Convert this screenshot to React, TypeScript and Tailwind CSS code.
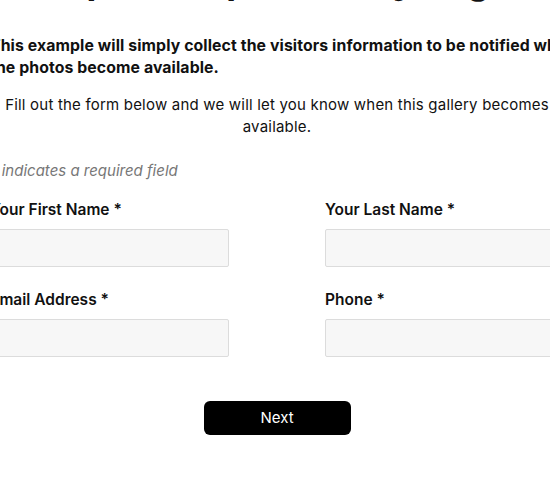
import { useState } from 'react'

// Gallery notify form: a wide centered column that is a little wider than the
// viewport, so both outer edges are clipped, as in the embedded page.

const font = { fontFamily: 'Inter, "Noto Sans", sans-serif' }

function Field({ label, value, onChange }: { label: string; value: string; onChange: (v: string) => void }) {
  return (
    <div className="flex flex-col">
      <label className="h-[22px] text-[15.5px] font-semibold leading-[22px] tracking-[0px] text-[#111]">{label}</label>
      <input
        value={value}
        onChange={(e) => onChange(e.target.value)}
        className="mt-[8px] h-[38px] w-full rounded-[2px] border border-[#dcdcdc] bg-[#f7f7f7] px-3 text-[15px] outline-none"
      />
    </div>
  )
}

export default function App() {
  const [form, setForm] = useState({ first: '', last: '', email: '', phone: '' })
  const set = (k: keyof typeof form) => (v: string) => setForm({ ...form, [k]: v })

  return (
    <div className="h-[501px] w-[550px] overflow-hidden bg-white" style={font}>
      <div className="-ml-[10px] w-[574px]">
        <h1 className="-mt-[39.5px] whitespace-nowrap text-center text-[36px] font-bold leading-[40px] text-[#111]">
          Example Sample Gallery Page Sign
        </h1>

        <p className="mt-[34.5px] whitespace-nowrap text-[15.8px] font-bold leading-[22px] tracking-[0.1px] text-[#111]">
          This example will simply collect the visitors information to be notified when
          <br />
          the photos become available.
        </p>

        <p className="mt-[15px] text-center text-[15px] leading-[22px] tracking-[0.2px] text-[#111]">
          Fill out the form below and we will let you know when this gallery becomes
          <br />
          available.
        </p>

        <p className="mt-[22px] text-[15px] italic leading-[22px] text-[#777]">
          <span className="text-[#777]">* </span>indicates a required field
        </p>

        <div className="mt-[17px] grid grid-cols-2 gap-x-[96px] gap-y-[22px]">
          <Field label="Your First Name *" value={form.first} onChange={set('first')} />
          <Field label="Your Last Name *" value={form.last} onChange={set('last')} />
          <Field label="Email Address *" value={form.email} onChange={set('email')} />
          <Field label="Phone *" value={form.phone} onChange={set('phone')} />
        </div>

        <div className="mt-[44px] flex justify-center">
          <button className="h-[34px] w-[147px] rounded-[6px] bg-black text-[15px] text-white">Next</button>
        </div>
      </div>
    </div>
  )
}
